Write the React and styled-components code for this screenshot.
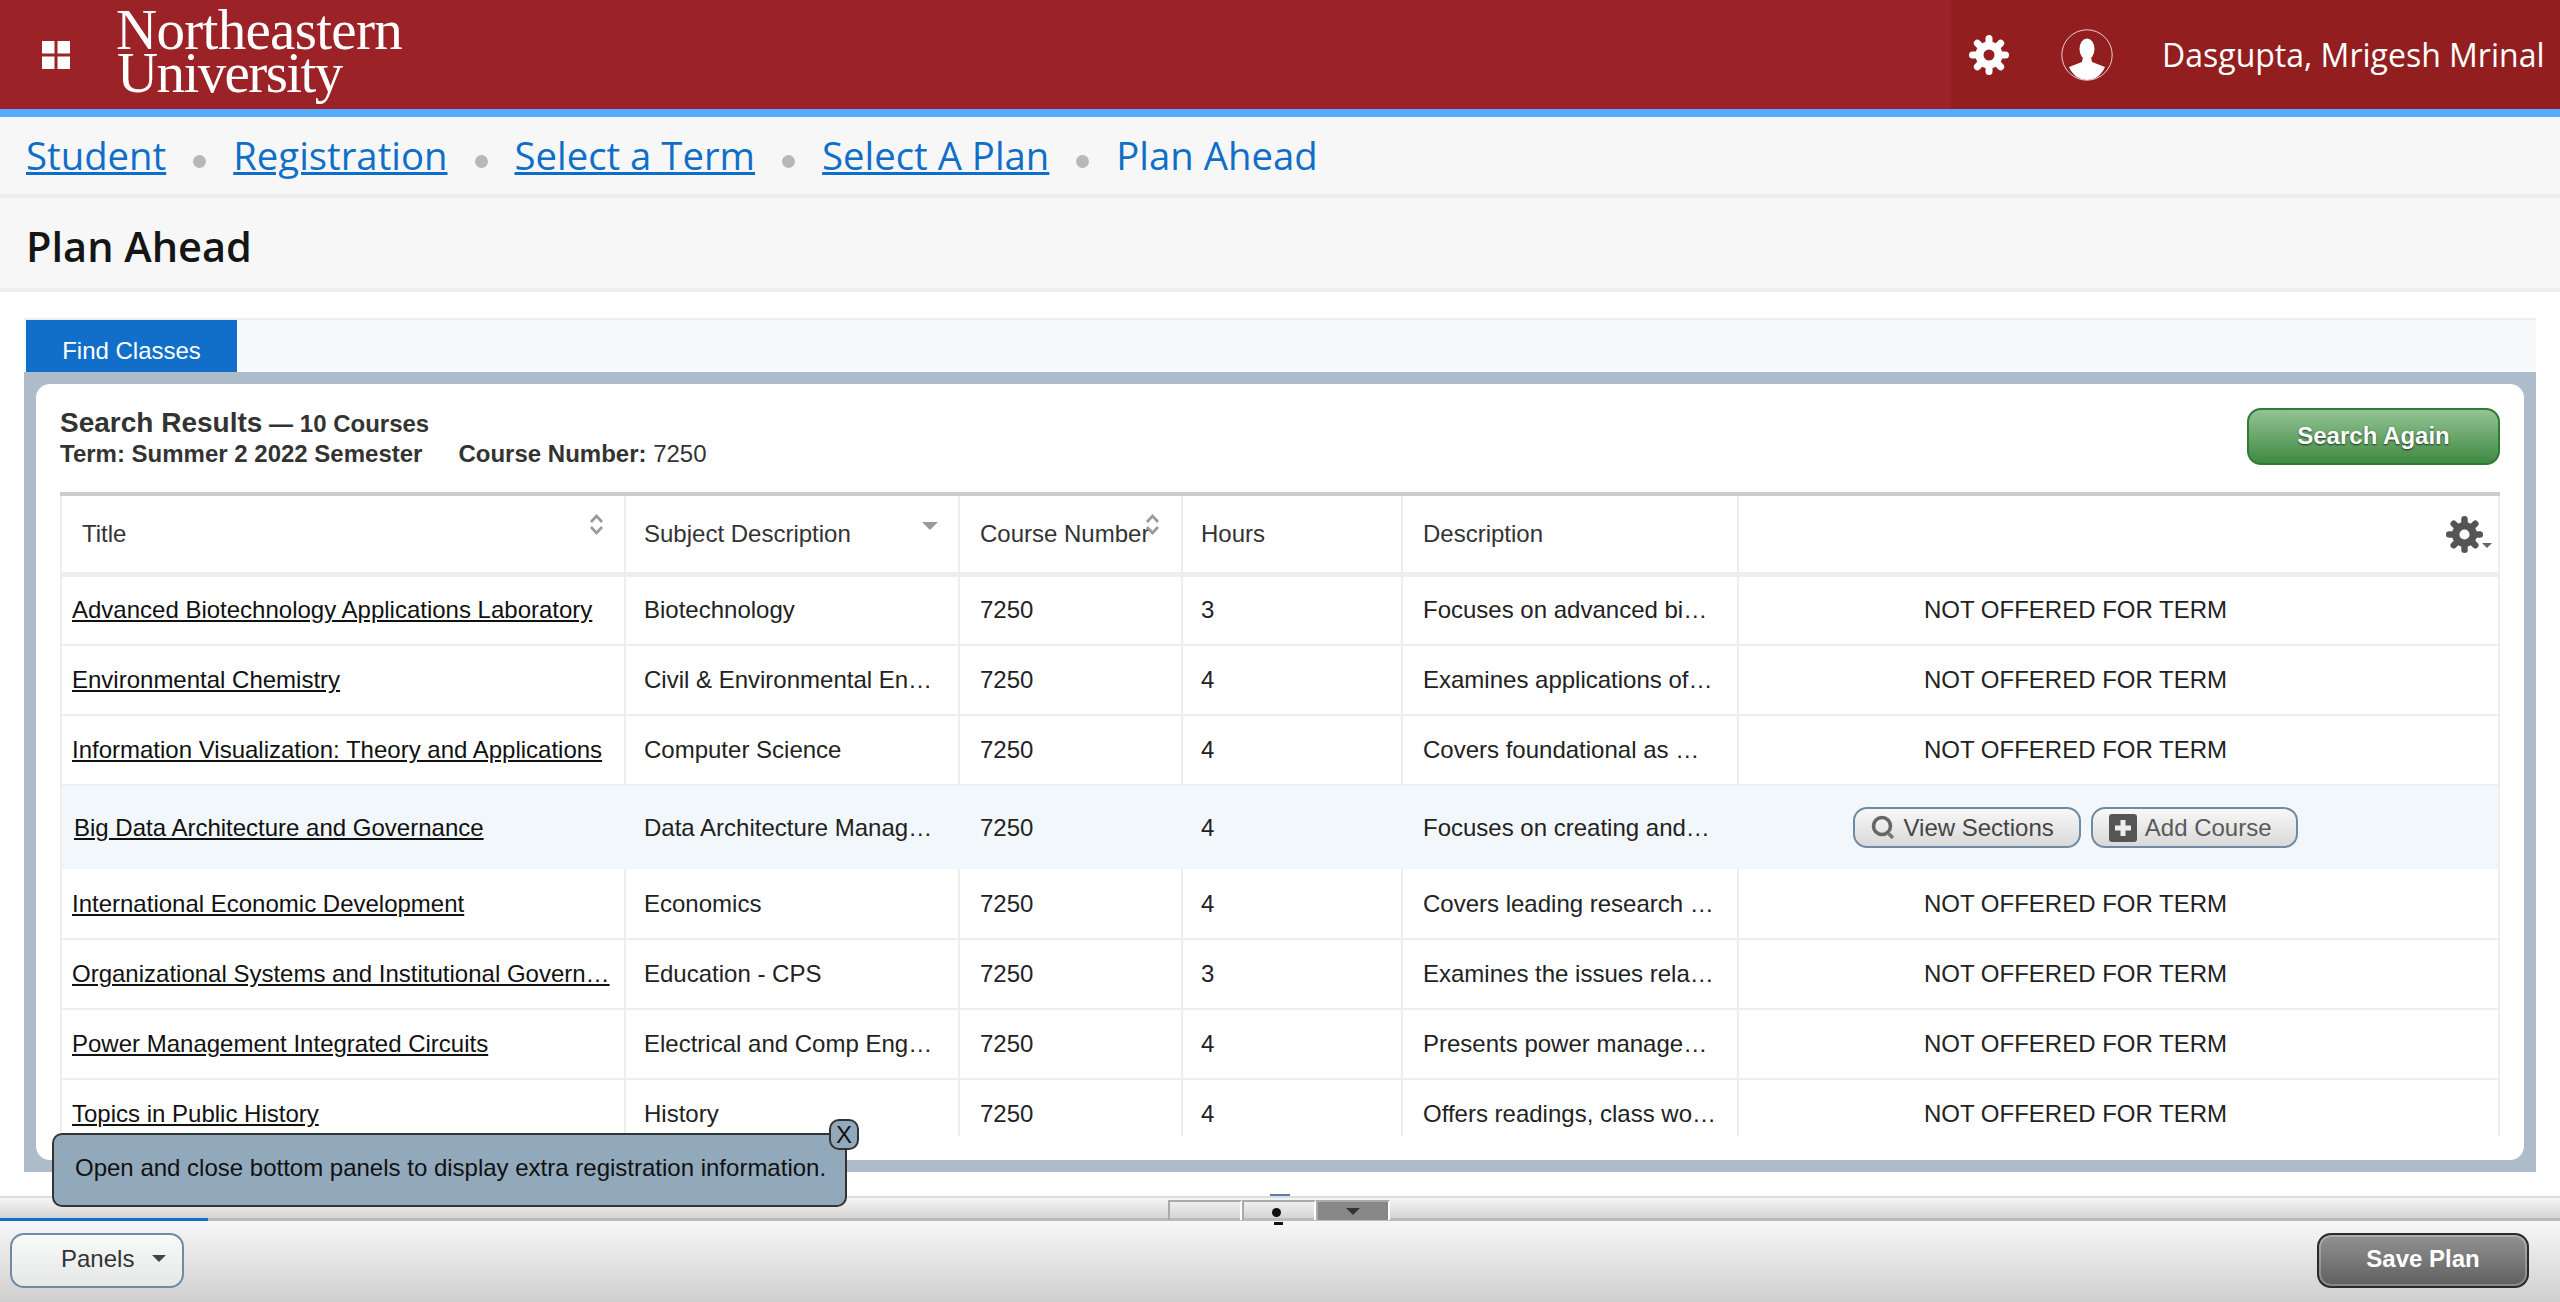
import React from "react"
import styled, { createGlobalStyle } from "styled-components"

const GlobalStyle = createGlobalStyle`
  html, body {
    margin: 0;
    padding: 0;
    background: #fff;
    font-family: "Liberation Sans", Arial, sans-serif;
  }
  * {
    box-sizing: border-box;
  }
`

const courses = [
  { title: "Advanced Biotechnology Applications Laboratory", subject: "Biotechnology", hours: 3, description: "Focuses on advanced bi…" },
  { title: "Environmental Chemistry", subject: "Civil & Environmental En…", hours: 4, description: "Examines applications of…" },
  { title: "Information Visualization: Theory and Applications", subject: "Computer Science", hours: 4, description: "Covers foundational as …" },
  { title: "Big Data Architecture and Governance", subject: "Data Architecture Manag…", hours: 4, description: "Focuses on creating and…", offered: true },
  { title: "International Economic Development", subject: "Economics", hours: 4, description: "Covers leading research …" },
  { title: "Organizational Systems and Institutional Govern…", subject: "Education - CPS", hours: 3, description: "Examines the issues rela…" },
  { title: "Power Management Integrated Circuits", subject: "Electrical and Comp Eng…", hours: 4, description: "Presents power manage…" },
  { title: "Topics in Public History", subject: "History", hours: 4, description: "Offers readings, class wo…" },
]

const crumbs = ["Student", "Registration", "Select a Term", "Select A Plan"]

function GearIcon({ size, color }) {
  const teeth = [0, 45, 90, 135, 180, 225, 270, 315]
  return (
    <svg width={size} height={size} viewBox="0 0 40 40">
      <circle cx="20" cy="20" r="9.5" fill="none" stroke={color} strokeWidth="8" />
      {teeth.map((angle) => (
        <line
          key={angle}
          x1="20"
          y1="9"
          x2="20"
          y2="3.5"
          stroke={color}
          strokeWidth="7"
          strokeLinecap="round"
          transform={`rotate(${angle} 20 20)`}
        />
      ))}
    </svg>
  )
}

function SortIcon() {
  return (
    <svg width="15" height="21" viewBox="0 0 15 21" fill="none" stroke="#999" strokeWidth="2.6">
      <path d="M2 8l5.5-6L13 8" />
      <path d="M2 13l5.5 6L13 13" />
    </svg>
  )
}

function App() {
  return (
    <Page>
      <GlobalStyle />
      <Header>
        <AppsButton>
          <svg width="28" height="28" viewBox="0 0 28 28" fill="#fff">
            <rect width="12.5" height="12.5" />
            <rect x="15.5" width="12.5" height="12.5" />
            <rect y="15.5" width="12.5" height="12.5" />
            <rect x="15.5" y="15.5" width="12.5" height="12.5" />
          </svg>
        </AppsButton>
        <Logo>
          <span>Northeastern</span>
          <span className="second">University</span>
        </Logo>
        <UserArea>
          <GearIcon size={40} color="#fff" />
          <svg width="52" height="52" viewBox="0 0 52 52">
            <defs>
              <clipPath id="avatar-clip">
                <circle cx="26" cy="26" r="25" />
              </clipPath>
            </defs>
            <circle cx="26" cy="26" r="25.2" fill="none" stroke="#e6cfcf" strokeWidth="1" />
            <g clipPath="url(#avatar-clip)" fill="#fff">
              <ellipse cx="26" cy="20" rx="7.5" ry="10.5" />
              <path d="M22 28h8l1 5 13 5c-4 9-11 13-18 13s-14-4-18-13l13-5z" />
            </g>
          </svg>
          <UserName>Dasgupta, Mrigesh Mrinal</UserName>
        </UserArea>
      </Header>

      <Breadcrumbs>
        {crumbs.map((crumb) => (
          <React.Fragment key={crumb}>
            <CrumbLink href="#">{crumb}</CrumbLink>
            <CrumbDot />
          </React.Fragment>
        ))}
        <CrumbCurrent>Plan Ahead</CrumbCurrent>
      </Breadcrumbs>

      <TitleBar>Plan Ahead</TitleBar>

      <Main>
        <TabStrip>
          <Tab>Find Classes</Tab>
        </TabStrip>
        <Panel>
          <Card>
            <ResultsHead>
              <div>
                <ResultsTitle>
                  Search Results <small>— 10 Courses</small>
                </ResultsTitle>
                <ResultsMeta>
                  <span>
                    <b>Term:</b> <b>Summer 2 2022 Semester</b>
                  </span>
                  <span>
                    <b>Course Number:</b> 7250
                  </span>
                </ResultsMeta>
              </div>
              <SearchAgain>Search Again</SearchAgain>
            </ResultsHead>

            <TableClip>
              <Table>
                <colgroup>
                  <col style={{ width: 564 }} />
                  <col style={{ width: 334 }} />
                  <col style={{ width: 223 }} />
                  <col style={{ width: 220 }} />
                  <col style={{ width: 336 }} />
                  <col />
                </colgroup>
                <thead>
                  <tr>
                    <HeadCell>
                      Title
                      <SortSlot $right={20} $top={18}>
                        <SortIcon />
                      </SortSlot>
                    </HeadCell>
                    <HeadCell>
                      Subject Description
                      <SortSlot $right={20} $top={26}>
                        <Caret $size={8} $color="#999" />
                      </SortSlot>
                    </HeadCell>
                    <HeadCell>
                      Course Number
                      <SortSlot $right={21} $top={18}>
                        <SortIcon />
                      </SortSlot>
                    </HeadCell>
                    <HeadCell>Hours</HeadCell>
                    <HeadCell>Description</HeadCell>
                    <HeadCell>
                      <TableSettings>
                        <GearIcon size={37} color="#555" />
                        <Caret $size={5} $color="#666" />
                      </TableSettings>
                    </HeadCell>
                  </tr>
                </thead>
                <tbody>
                  {courses.map((course) => (
                    <Row key={course.title} $offered={course.offered}>
                      <TitleCell $offered={course.offered}>
                        <a href="#">{course.title}</a>
                      </TitleCell>
                      <Cell>{course.subject}</Cell>
                      <Cell>7250</Cell>
                      <Cell>{course.hours}</Cell>
                      <Cell>{course.description}</Cell>
                      <ActionCell>
                        {course.offered ? (
                          <ActionRow>
                            <ActionButton>
                              <svg width="24" height="26" viewBox="0 0 24 26" fill="none">
                                <circle cx="11" cy="11" r="8.5" stroke="#666" strokeWidth="3.6" />
                                <path d="M17 18l5 5" stroke="#777" strokeWidth="3.6" />
                              </svg>
                              View Sections
                            </ActionButton>
                            <ActionButton $muted>
                              <svg width="28" height="28" viewBox="0 0 28 28">
                                <rect width="28" height="28" rx="3" fill="#555" />
                                <path d="M14 6v16M6 14h16" stroke="#eee" strokeWidth="5" />
                              </svg>
                              Add Course
                            </ActionButton>
                          </ActionRow>
                        ) : (
                          "NOT OFFERED FOR TERM"
                        )}
                      </ActionCell>
                    </Row>
                  ))}
                </tbody>
              </Table>
            </TableClip>
          </Card>
        </Panel>

        <Hint>
          Open and close bottom panels to display extra registration information.
          <HintClose>X</HintClose>
        </Hint>
      </Main>

      <Splitter>
        <SplitterButton />
        <SplitterButton>
          <SplitterDot />
        </SplitterButton>
        <SplitterButton $active>
          <Caret $size={7} $color="#333" />
        </SplitterButton>
      </Splitter>

      <Toolbar>
        <PanelsButton>
          <span>Panels</span>
          <Caret $size={7} $color="#444" />
        </PanelsButton>
        <SavePlan>Save Plan</SavePlan>
      </Toolbar>
    </Page>
  )
}

const Page = styled.div`
  height: 1302px;
  display: flex;
  flex-direction: column;
  overflow: hidden;
  background: #fff;
`

const Header = styled.header`
  height: 117px;
  flex: none;
  display: flex;
  align-items: stretch;
  background: #9b2226;
  border-bottom: 8px solid #57abff;
`

const AppsButton = styled.div`
  width: 116px;
  flex: none;
  padding: 41px 0 0 42px;
`

const Logo = styled.div`
  display: flex;
  flex-direction: column;
  padding-top: 8px;
  color: #fff;
  font-family: "Liberation Serif", "Times New Roman", serif;
  font-size: 57px;
  line-height: 43px;
  letter-spacing: -0.7px;

  .second {
    margin-left: 1px;
    letter-spacing: -1.6px;
  }
`

const UserArea = styled.div`
  margin-left: auto;
  width: 609px;
  display: flex;
  align-items: center;
  padding-left: 18px;
  background: #931e20;

  svg + svg {
    margin-left: 52px;
  }
`

const UserName = styled.div`
  margin-left: 49px;
  color: #fff;
  font-family: "Open Sans", sans-serif;
  font-size: 32px;
  white-space: nowrap;
`

const Breadcrumbs = styled.nav`
  height: 81px;
  flex: none;
  display: flex;
  align-items: center;
  padding: 0 0 1px 26px;
  background: #f7f7f7;
  border-bottom: 4px solid #eee;
  font-family: "Open Sans", sans-serif;
  font-size: 38.3px;
`

const CrumbLink = styled.a`
  color: #0f6fc8;
  text-decoration: underline;
  text-decoration-thickness: 3px;
`

const CrumbCurrent = styled.span`
  color: #0f6fc8;
`

const CrumbDot = styled.i`
  width: 13px;
  height: 13px;
  margin: 12px 27px 0;
  border-radius: 50%;
  background: #b8b8b8;
`

const TitleBar = styled.h1`
  height: 94px;
  flex: none;
  margin: 0;
  padding: 5px 0 0 26px;
  background: #f7f7f7;
  border-bottom: 4px solid #eee;
  color: #151515;
  font-family: "Open Sans", sans-serif;
  font-size: 41.5px;
  font-weight: 600;
  line-height: 86px;
`

const Main = styled.main`
  position: relative;
  height: 904px;
  flex: none;
  padding: 26px 24px 0;
`

const TabStrip = styled.div`
  height: 54px;
  display: flex;
  align-items: flex-end;
  padding-left: 2px;
  background: #f8f9fb;
  border-top: 2px solid #eee;
`

const Tab = styled.div`
  width: 211px;
  height: 52px;
  padding-top: 16px;
  background: #116fc9;
  color: #fff;
  font-size: 24px;
  text-align: center;
  line-height: 30px;
`

const Panel = styled.div`
  height: 800px;
  padding: 12px;
  background: #aebbca;
`

const Card = styled.div`
  height: 776px;
  padding: 24px 24px 0;
  border-radius: 14px;
  background: #fff;
`

const ResultsHead = styled.div`
  height: 84px;
  display: flex;
  justify-content: space-between;
  align-items: flex-start;
`

const ResultsTitle = styled.div`
  color: #333;
  font-size: 28px;
  font-weight: 700;
  line-height: 30px;

  small {
    margin-left: -1px;
    font-size: 24px;
  }
`

const ResultsMeta = styled.div`
  display: flex;
  gap: 36px;
  color: #333;
  font-size: 24px;
  line-height: 30px;
`

const SearchAgain = styled.button`
  width: 253px;
  height: 57px;
  padding-bottom: 2px;
  border: 2px solid #2f7a37;
  border-radius: 14px;
  background: linear-gradient(#93c393, #3f8a42);
  color: #fff;
  font-family: inherit;
  font-size: 24px;
  font-weight: 700;
  text-shadow: 0 1px 2px rgba(0, 0, 0, 0.7);
`

const TableClip = styled.div`
  height: 644px;
  overflow: hidden;
`

const Table = styled.table`
  width: 2440px;
  table-layout: fixed;
  border-collapse: collapse;
  border-right: 2px solid #eee;
  border-left: 2px solid #eee;
  color: #222;
  font-size: 24px;

  th:nth-child(2),
  th:nth-child(4),
  td:nth-child(2),
  td:nth-child(4) {
    padding-left: 18px;
  }
`

const HeadCell = styled.th`
  position: relative;
  height: 80px;
  padding: 0 0 0 20px;
  border-top: 4px solid #ccc;
  border-bottom: 5px solid #eee;
  border-right: 2px solid #eee;
  color: #333;
  font-weight: 400;
  text-align: left;
  white-space: nowrap;
`

const SortSlot = styled.span`
  position: absolute;
  top: ${(p) => p.$top}px;
  right: ${(p) => p.$right}px;
  line-height: 0;
`

const Caret = styled.i`
  display: inline-block;
  width: 0;
  height: 0;
  border-left: ${(p) => p.$size}px solid transparent;
  border-right: ${(p) => p.$size}px solid transparent;
  border-top: ${(p) => p.$size}px solid ${(p) => p.$color};
`

const TableSettings = styled.span`
  position: absolute;
  top: 20px;
  right: 6px;
  display: flex;
  align-items: flex-end;

  i {
    margin: 0 0 5px -1px;
  }
`

const Row = styled.tr`
  height: ${(p) => (p.$offered ? "84px" : "70px")};
  background: ${(p) => (p.$offered ? "#f2f7fb" : "#fff")};
  border-bottom: ${(p) => (p.$offered ? "0" : "2px solid #eee")};

  &:first-child {
    height: 71px;
  }

  td {
    border-right-color: ${(p) => (p.$offered ? "#f2f7fb" : "#eee")};
  }
`

const Cell = styled.td`
  padding: 0 0 0 20px;
  border-right: 2px solid #eee;
  white-space: nowrap;
  overflow: hidden;
`

const TitleCell = styled(Cell)`
  padding-left: ${(p) => (p.$offered ? "12px" : "10px")};

  a {
    color: #111;
  }
`

const ActionCell = styled(Cell)`
  padding: 0 86px 0 0;
  text-align: center;
  border-right: 0;
`

const ActionRow = styled.div`
  display: flex;
  justify-content: center;
  gap: 10px;
`

const ActionButton = styled.button`
  height: 41px;
  display: inline-flex;
  align-items: center;
  gap: 8px;
  padding: 0 ${(p) => (p.$muted ? "24px" : "25px")} 0 16px;
  border: 2px solid #6f8ba3;
  border-radius: 14px;
  background: linear-gradient(#f8f8f8, #d9d9d9);
  color: ${(p) => (p.$muted ? "#5a5a5a" : "#444")};
  font-family: inherit;
  font-size: 24px;
`

const Hint = styled.div`
  position: absolute;
  top: 841px;
  left: 52px;
  width: 795px;
  height: 74px;
  padding-left: 21px;
  border: 2px solid #333;
  border-radius: 10px;
  background: #92a9bc;
  color: #111;
  font-size: 24px;
  line-height: 66px;
  white-space: nowrap;
  z-index: 3;
`

const HintClose = styled.span`
  position: absolute;
  top: -16px;
  right: -14px;
  width: 30px;
  height: 31px;
  border: 2px solid #333;
  border-radius: 10px;
  background: #92a9bc;
  font-size: 24px;
  line-height: 27px;
  text-align: center;
`

const Splitter = styled.div`
  position: relative;
  height: 25px;
  flex: none;
  display: flex;
  padding: 2px 0 0 1168px;
  background: linear-gradient(#f6f6f6, #d4d4d4);
  border-top: 2px solid #ddd;
  border-bottom: 3px solid #bbb;

  &::before {
    content: "";
    position: absolute;
    top: -4px;
    left: 1270px;
    width: 20px;
    height: 2px;
    background: #5a7cae;
  }

  &::after {
    content: "";
    position: absolute;
    bottom: -3px;
    left: 0;
    width: 208px;
    height: 3px;
    background: #116fc9;
  }
`

const SplitterButton = styled.div`
  width: 74px;
  height: 20px;
  display: flex;
  align-items: center;
  justify-content: center;
  background: ${(p) => (p.$active ? "#888" : "transparent")};
  border-top: 2px solid #aaa;
  border-left: 2px solid #aaa;
  border-right: 2px solid #fff;
`

const SplitterDot = styled.i`
  position: relative;
  width: 9px;
  height: 9px;
  margin: 3px 5px 0 0;
  border-radius: 50%;
  background: #111;

  &::after {
    content: "";
    position: absolute;
    top: 14px;
    left: 2px;
    width: 9px;
    height: 3px;
    background: #111;
  }
`

const Toolbar = styled.footer`
  flex: 1;
  display: flex;
  justify-content: space-between;
  align-items: flex-start;
  padding: 12px 31px 0 10px;
  background: linear-gradient(#f7f7f7, #cfcfcf);
`

const PanelsButton = styled.button`
  width: 174px;
  height: 55px;
  display: flex;
  align-items: center;
  gap: 18px;
  padding: 0 0 4px 49px;
  border: 2px solid #6f8ba3;
  border-radius: 14px;
  background: linear-gradient(#f8f9f9, #e6e8e8);
  color: #333;
  font-family: inherit;
  font-size: 24px;
`

const SavePlan = styled.button`
  width: 212px;
  height: 55px;
  padding-bottom: 4px;
  border: 2px solid #2b2b2b;
  border-radius: 14px;
  background: linear-gradient(#929292, #5f5f5f);
  box-shadow: inset 0 0 0 2px rgba(255, 255, 255, 0.25);
  color: #fff;
  font-family: inherit;
  font-size: 24px;
  font-weight: 700;
`

export default App
